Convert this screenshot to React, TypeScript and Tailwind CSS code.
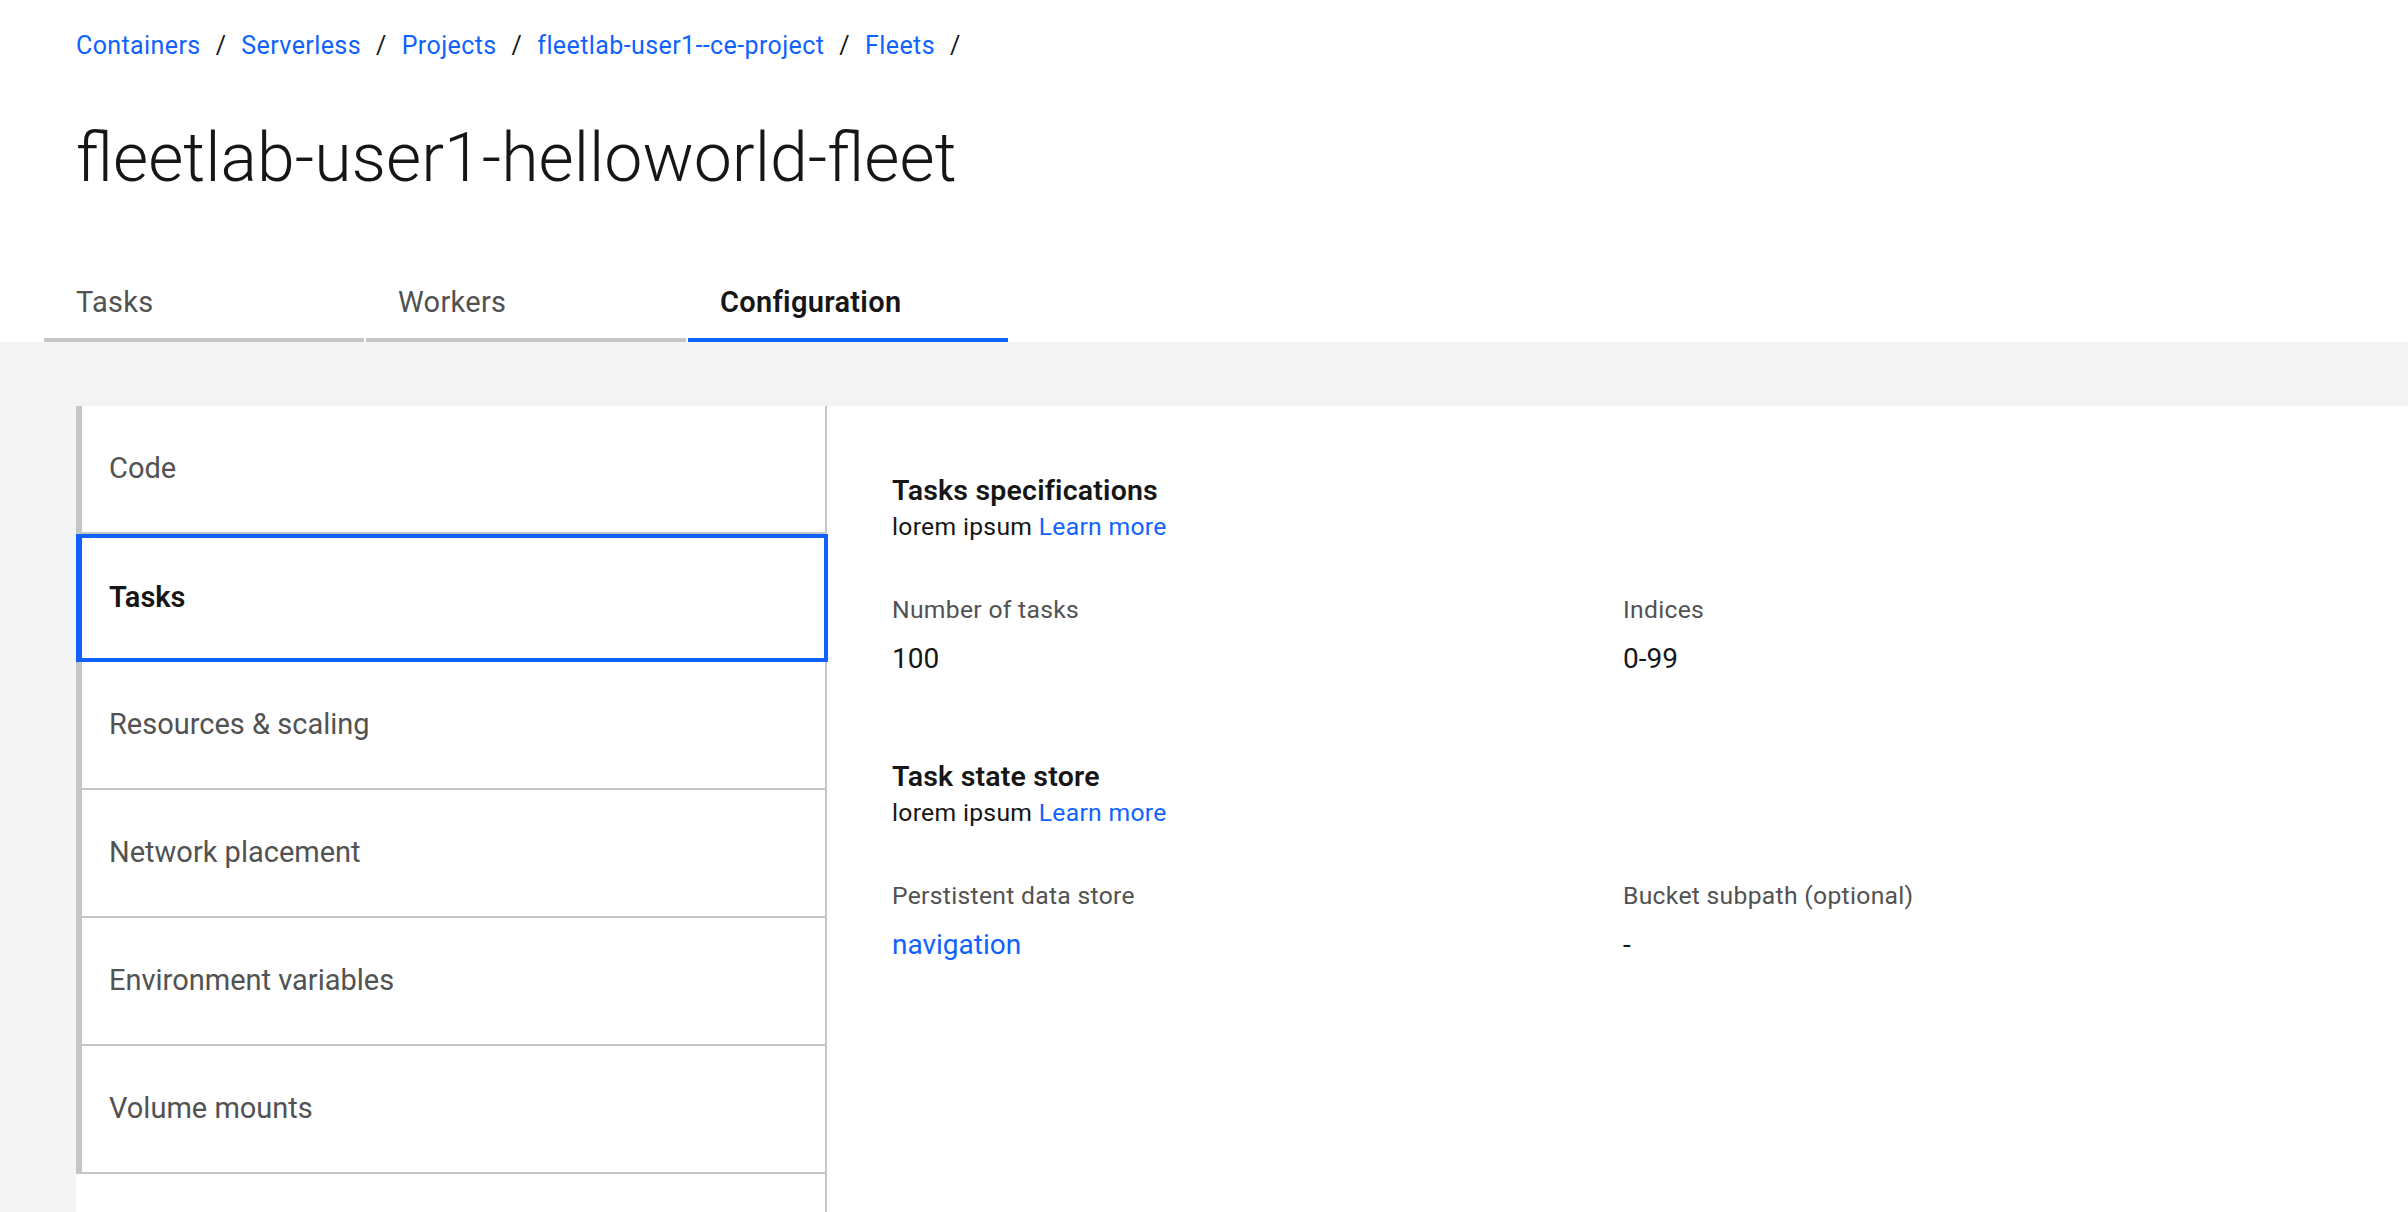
const crumbs = ["Containers", "Serverless", "Projects", "fleetlab-user1--ce-project", "Fleets"];

const tabs = [
  { label: "Tasks", active: false },
  { label: "Workers", active: false },
  { label: "Configuration", active: true },
];

const sideItems = [
  "Code",
  "Tasks",
  "Resources & scaling",
  "Network placement",
  "Environment variables",
  "Volume mounts",
];

function Section({
  title,
  fields,
}: {
  title: string;
  fields: { label: string; value: string; link?: boolean }[];
}) {
  return (
    <div>
      <h3 className="text-[28.5px] leading-[36px] font-semibold tracking-[0.2px] text-[#161616]">{title}</h3>
      <p className="text-[24.7px] leading-[36px] tracking-[0.3px] text-[#161616]">
        lorem ipsum <a className="text-[#0f62fe]">Learn more</a>
      </p>
      <div className="mt-[47px] grid grid-cols-[731px_1fr]">
        {fields.map((f) => (
          <div key={f.label}>
            <div className="text-[24.7px] leading-[36px] tracking-[0.3px] text-[#525252]">{f.label}</div>
            <div
              className={
                "mt-[11px] text-[28px] leading-[40px] " + (f.link ? "text-[#0f62fe]" : "text-[#161616]")
              }
            >
              {f.value}
            </div>
          </div>
        ))}
      </div>
    </div>
  );
}

export default function App() {
  return (
    <div className="min-h-screen w-full bg-[#f4f4f4] font-[family-name:Roboto,sans-serif] text-[#161616]">
      {/* Header */}
      <header className="bg-white">
        <nav className="flex h-[92px] items-center pl-[76px] text-[25px] tracking-[0.4px]">
          {crumbs.map((c) => (
            <span key={c} className="flex items-center">
              <a className="text-[#0f62fe]">{c}</a>
              <span className="mx-[15px] text-[#161616]">/</span>
            </span>
          ))}
        </nav>
        <h1 className="mt-[26px] pl-[76px] text-[68px] leading-[80px] font-light">
          fleetlab-user1-helloworld-fleet
        </h1>
        <div className="mt-[64px] flex gap-[2px] pl-[44px]">
          {tabs.map((t) => (
            <div
              key={t.label}
              className={
                "flex h-[80px] w-[320px] items-center border-b-4 pl-[32px] pt-[5px] text-[29px] tracking-[0.3px] " +
                (t.active
                  ? "border-[#0f62fe] font-semibold text-[#161616]"
                  : "border-[#c6c6c6] text-[#525252]")
              }
            >
              {t.label}
            </div>
          ))}
        </div>
      </header>

      {/* Body */}
      <div className="pl-[76px] pt-[64px]">
        <div className="flex min-h-[806px] bg-white">
          <aside className="w-[751px] shrink-0 border-r-2 border-[#c6c6c6]">
            {sideItems.map((item) =>
              item === "Tasks" ? (
                <div
                  key={item}
                  className="flex h-[128px] w-[752px] items-center border-4 border-l-[6px] border-[#0f62fe] pl-[27px] text-[29px] font-semibold text-[#161616]"
                >
                  {item}
                </div>
              ) : (
                <div
                  key={item}
                  className="flex h-[128px] items-center border-b-2 border-l-[6px] border-[#c6c6c6] pl-[27px] text-[29px] text-[#525252]"
                >
                  {item}
                </div>
              )
            )}
          </aside>

          <main className="flex-1 pl-[65px] pt-[67px]">
            <Section
              title="Tasks specifications"
              fields={[
                { label: "Number of tasks", value: "100" },
                { label: "Indices", value: "0-99" },
              ]}
            />
            <div className="mt-[80px]">
              <Section
                title="Task state store"
                fields={[
                  { label: "Perstistent data store", value: "navigation", link: true },
                  { label: "Bucket subpath (optional)", value: "-" },
                ]}
              />
            </div>
          </main>
        </div>
      </div>
    </div>
  );
}
